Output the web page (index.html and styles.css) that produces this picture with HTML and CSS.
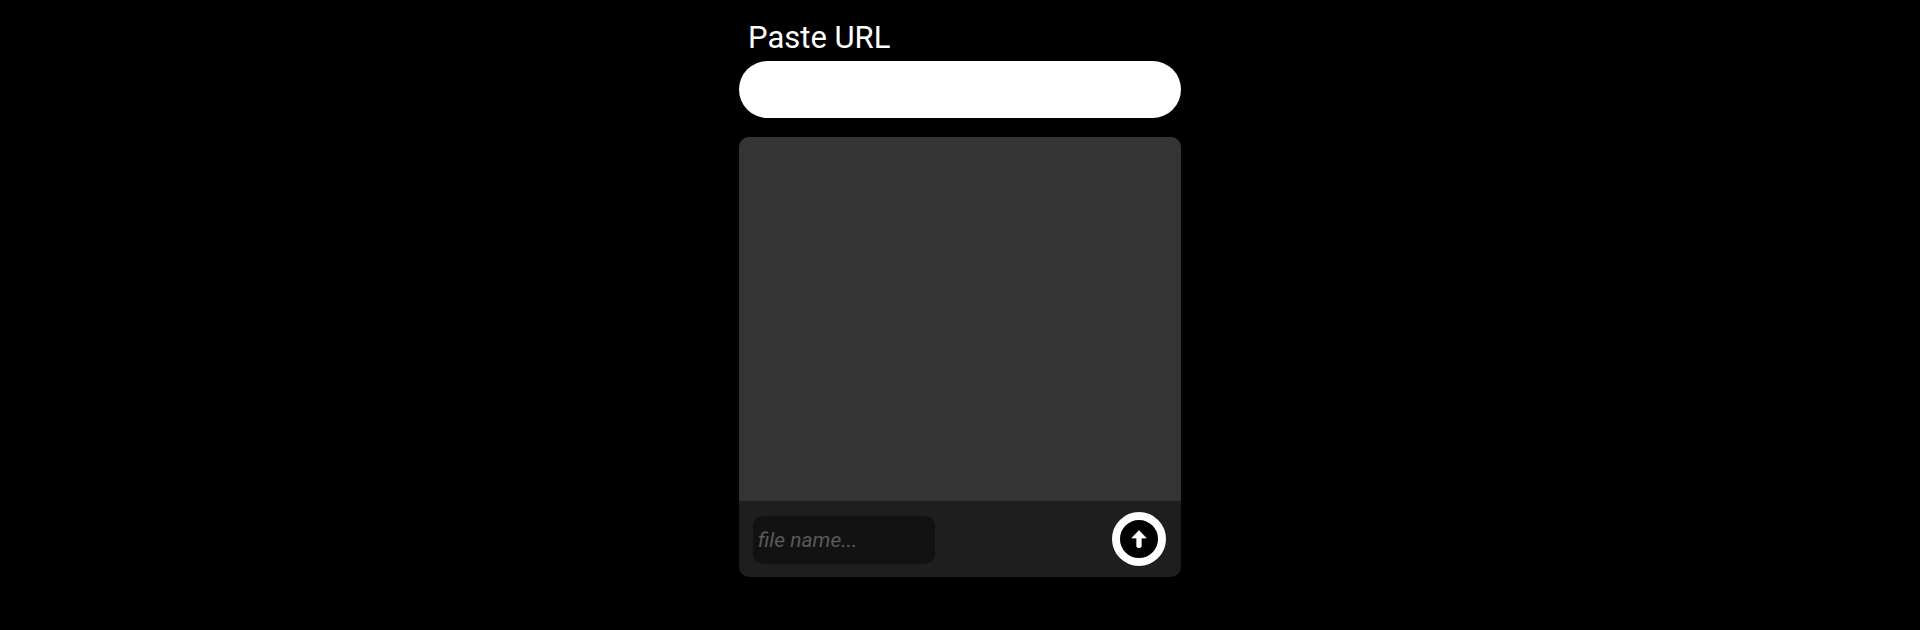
FILE: index.html
```html
<!DOCTYPE html>
<html lang="en">
<head>
<meta charset="utf-8">
<title>Paste URL</title>
<link rel="stylesheet" href="styles.css">
</head>
<body>
<main class="panel">
  <label class="url-label" for="url">Paste URL</label>
  <input class="url-input" id="url" type="text">
  <section class="card">
    <div class="preview"></div>
    <div class="footer">
      <input class="file-name" type="text" placeholder="file name...">
      <button class="upload" type="button" aria-label="Upload">
        <svg class="upload-icon" viewBox="0 0 20 20" width="20" height="20"><path d="M10 1.6 L17.2 9 H12.2 V17.4 Q12.2 18.4 11.2 18.4 H8.8 Q7.8 18.4 7.8 17.4 V9 H2.8 Z" fill="#fff" stroke="#fff" stroke-width=".8" stroke-linejoin="round"/></svg>
      </button>
    </div>
  </section>
</main>
</body>
</html>
```
FILE: styles.css
```css
* { box-sizing: border-box; }
html, body { margin: 0; height: 100%; background: #000; overflow: hidden; }
body { font-family: Roboto, sans-serif; }
.panel { width: 442px; margin: 0 auto; padding-top: 20px; display: flex; flex-direction: column; }
.url-label { display: block; color: #fff; font-size: 31px; line-height: 36px; margin: 0 0 5px 9px; height: 36px; font-weight: 400; }
.url-input { display: block; width: 100%; height: 57px; border: 0; border-radius: 28.5px; background: #fff; outline: 0; }
.card { margin-top: 19px; height: 440px; border-radius: 10px; overflow: hidden; display: flex; flex-direction: column; background: #1e1e1e; }
.preview { height: 364px; background: #343434; }
.footer { flex: 1; display: flex; align-items: center; justify-content: space-between; padding: 0 15px 0 14px; }
.file-name { width: 182px; height: 48px; margin-top: 1px; border: 0; border-radius: 10px; background: #121212; color: #fff; font: italic 400 21px Roboto, sans-serif; padding: 0 5px; outline: 0; }
.file-name::placeholder { color: #5a5a5a; opacity: 1; }
.upload { width: 54px; height: 54px; padding: 0; border: 8px solid #fff; border-radius: 50%; background: #000; display: flex; align-items: center; justify-content: center; }
.upload-icon { display: block; }
```
